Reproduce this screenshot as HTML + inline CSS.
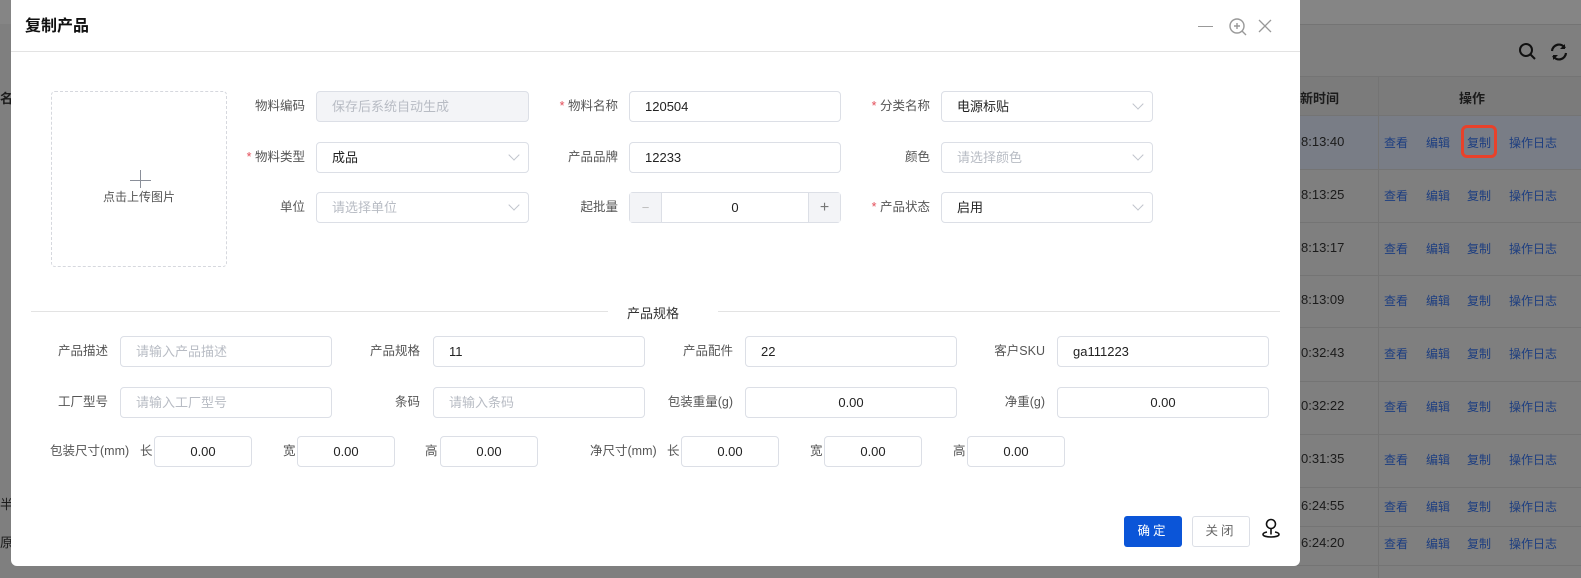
<!DOCTYPE html>
<html><head><meta charset="utf-8">
<style>
*{box-sizing:border-box;margin:0;padding:0}
body{width:1581px;height:578px;overflow:hidden;background:#7f7f7f;font-family:"Liberation Sans","Noto Sans CJK SC",sans-serif;font-size:13px;position:relative}
.a{position:absolute}
.bg-line{position:absolute;left:1290px;width:291px;height:1px;background:#747474}
.t{position:absolute;left:1301px;color:#1b1b1b;font-size:13px}
.lk{position:absolute;color:#1d3e80;font-size:12px}
.dlg{position:absolute;left:11px;top:0;width:1289px;height:566px;background:#fff;border-radius:0 0 6px 6px}
.lbl{position:absolute;color:#555;font-size:12.5px;text-align:right;line-height:30px;height:30px}
.req:before{content:"* ";color:#e34d59}
.in{position:absolute;height:31px;border:1px solid #dcdfe6;border-radius:4px;background:#fff;line-height:29px;padding-left:15px;font-size:13px;color:#222}
.ph{color:#b8bcc4}
.dis{background:#f3f4f7}
.c{text-align:center;padding-left:0}
.arr{position:absolute;right:10px;top:8px;width:8px;height:8px;border-right:1px solid #c0c4cc;border-bottom:1px solid #c0c4cc;transform:rotate(45deg)}
</style></head><body>
<!-- background page -->
<div class="a" style="left:0;top:0;width:1581px;height:24px;background:#858585"></div>
<div class="a" style="left:1290px;top:76px;width:291px;height:39px;background:#7b7b7b"></div>
<div class="a" style="left:1290px;top:115px;width:291px;height:54px;background:#797d86"></div>
<div class="bg-line" style="top:24px"></div>
<div class="bg-line" style="top:76px"></div>
<div class="bg-line" style="top:115px"></div>
<div class="bg-line" style="top:169px"></div>
<div class="bg-line" style="top:222px"></div>
<div class="bg-line" style="top:275px"></div>
<div class="bg-line" style="top:327px"></div>
<div class="bg-line" style="top:381px"></div>
<div class="bg-line" style="top:434px"></div>
<div class="bg-line" style="top:487px"></div>
<div class="bg-line" style="top:526px"></div>
<div class="bg-line" style="top:565px"></div>
<div class="a" style="left:1378px;top:76px;width:1px;height:502px;background:#747474"></div>
<svg class="a" style="left:1518px;top:42px" width="20" height="20"><circle cx="8" cy="8" r="6" fill="none" stroke="#111" stroke-width="2"/><line x1="12.5" y1="12.5" x2="17" y2="17" stroke="#111" stroke-width="2"/></svg>
<svg class="a" style="left:1549px;top:42px" width="20" height="20"><path d="M3 9a7 7 0 0 1 13-3M17 11a7 7 0 0 1-13 3" fill="none" stroke="#111" stroke-width="2.2"/><path d="M16 2v5h-5z" fill="#111"/><path d="M4 18v-5h5z" fill="#111"/></svg>
<div class="a" style="left:1300px;top:88px;font-weight:bold;color:#1b1b1b">新时间</div>
<div class="a" style="left:1459px;top:88px;font-weight:bold;color:#1b1b1b">操作</div>
<div class="a" style="left:0;top:88px;font-weight:bold;color:#1b1b1b">名</div>
<div class="a" style="left:0;top:494px;color:#1b1b1b">半</div>
<div class="a" style="left:0;top:532px;color:#1b1b1b">原</div>
<div class="t" style="top:134px">8:13:40</div>
<div class="t" style="top:187px">8:13:25</div>
<div class="t" style="top:240px">8:13:17</div>
<div class="t" style="top:292px">8:13:09</div>
<div class="t" style="top:345px">0:32:43</div>
<div class="t" style="top:398px">0:32:22</div>
<div class="t" style="top:451px">0:31:35</div>
<div class="t" style="top:498px">6:24:55</div>
<div class="t" style="top:535px">6:24:20</div>
<div id="links"></div>
<div class="a" style="left:1461px;top:125px;width:36px;height:33px;border:3px solid #e8412a;border-radius:6px"></div>
<script>
var ys=[134,187,240,292,345,398,451,498,535],h='';
ys.forEach(function(y){h+='<div class="lk" style="left:1384px;top:'+y+'px">查看</div><div class="lk" style="left:1426px;top:'+y+'px">编辑</div><div class="lk" style="left:1467px;top:'+y+'px">复制</div><div class="lk" style="left:1509px;top:'+y+'px">操作日志</div>';});
document.getElementById('links').innerHTML=h;
</script>

<div class="dlg">
<div class="a" style="left:14px;top:12px;font-size:16px;font-weight:bold;color:#111">复制产品</div>
<div class="a" style="left:0;top:51px;width:1289px;height:1px;background:#e3e3e3"></div>
<div class="a" style="left:1187px;top:26px;width:15px;height:1px;background:#999"></div>
<svg class="a" style="left:1217px;top:17px" width="20" height="20"><circle cx="9" cy="9" r="7" fill="none" stroke="#999" stroke-width="1.4"/><path d="M9 6v6M6 9h6M14 14l4 4" stroke="#999" stroke-width="1.4"/></svg>
<svg class="a" style="left:1247px;top:19px" width="14" height="14"><path d="M1 1l12 12M13 1L1 13" stroke="#999" stroke-width="1.3"/></svg>

<div class="a" style="left:40px;top:91px;width:176px;height:176px;border:1px dashed #d6d8de;border-radius:4px"></div>
<div class="a" style="left:129px;top:170px;width:1px;height:18px;background:#8a8f99"></div>
<div class="a" style="left:119px;top:180px;width:21px;height:1px;background:#8a8f99"></div>
<div class="a" style="left:92px;top:188px;color:#555;font-size:12px">点击上传图片</div>
</div>

<!-- top form (page coords) -->
<div class="lbl" style="left:200px;width:105px;top:91px">物料编码</div>
<div class="in dis ph" style="left:316px;top:91px;width:213px">保存后系统自动生成</div>
<div class="lbl req" style="left:200px;width:105px;top:142px">物料类型</div>
<div class="in" style="left:316px;top:142px;width:213px">成品<span class="arr"></span></div>
<div class="lbl" style="left:200px;width:105px;top:192px">单位</div>
<div class="in ph" style="left:316px;top:192px;width:213px">请选择单位<span class="arr"></span></div>

<div class="lbl req" style="left:510px;width:108px;top:91px">物料名称</div>
<div class="in" style="left:629px;top:91px;width:212px">120504</div>
<div class="lbl" style="left:510px;width:108px;top:142px">产品品牌</div>
<div class="in" style="left:629px;top:142px;width:212px">12233</div>
<div class="lbl" style="left:510px;width:108px;top:192px">起批量</div>
<div class="in c" style="left:629px;top:192px;width:212px">0
 <div class="a" style="left:0;top:0;width:32px;height:29px;background:#f3f4f7;border-right:1px solid #dcdfe6;color:#bbb;text-align:center">−</div>
 <div class="a" style="right:0;top:0;width:32px;height:29px;background:#f3f4f7;border-left:1px solid #dcdfe6;color:#777;text-align:center;font-size:16px">+</div>
</div>

<div class="lbl req" style="left:820px;width:110px;top:91px">分类名称</div>
<div class="in" style="left:941px;top:91px;width:212px">电源标贴<span class="arr"></span></div>
<div class="lbl" style="left:820px;width:110px;top:142px">颜色</div>
<div class="in ph" style="left:941px;top:142px;width:212px">请选择颜色<span class="arr"></span></div>
<div class="lbl req" style="left:820px;width:110px;top:192px">产品状态</div>
<div class="in" style="left:941px;top:192px;width:212px">启用<span class="arr"></span></div>

<div class="a" style="left:31px;top:311px;width:577px;height:1px;background:#e3e3e3"></div>
<div class="a" style="left:718px;top:311px;width:562px;height:1px;background:#e3e3e3"></div>
<div class="a" style="left:627px;top:303px;color:#333;font-size:13px">产品规格</div>

<div class="lbl" style="left:20px;width:88px;top:336px">产品描述</div>
<div class="in ph" style="left:120px;top:336px;width:212px">请输入产品描述</div>
<div class="lbl" style="left:330px;width:90px;top:336px">产品规格</div>
<div class="in" style="left:433px;top:336px;width:212px">11</div>
<div class="lbl" style="left:640px;width:93px;top:336px">产品配件</div>
<div class="in" style="left:745px;top:336px;width:212px">22</div>
<div class="lbl" style="left:950px;width:95px;top:336px">客户SKU</div>
<div class="in" style="left:1057px;top:336px;width:212px">ga111223</div>

<div class="lbl" style="left:20px;width:88px;top:387px">工厂型号</div>
<div class="in ph" style="left:120px;top:387px;width:212px">请输入工厂型号</div>
<div class="lbl" style="left:330px;width:90px;top:387px">条码</div>
<div class="in ph" style="left:433px;top:387px;width:212px">请输入条码</div>
<div class="lbl" style="left:640px;width:93px;top:387px">包装重量(g)</div>
<div class="in c" style="left:745px;top:387px;width:212px">0.00</div>
<div class="lbl" style="left:950px;width:95px;top:387px">净重(g)</div>
<div class="in c" style="left:1057px;top:387px;width:212px">0.00</div>

<div class="lbl" style="left:50px;top:436px;text-align:left">包装尺寸(mm)</div>
<div class="lbl" style="left:140px;top:436px">长</div>
<div class="in c" style="left:154px;top:436px;width:98px">0.00</div>
<div class="lbl" style="left:283px;top:436px">宽</div>
<div class="in c" style="left:297px;top:436px;width:98px">0.00</div>
<div class="lbl" style="left:425px;top:436px">高</div>
<div class="in c" style="left:440px;top:436px;width:98px">0.00</div>
<div class="lbl" style="left:590px;top:436px;text-align:left">净尺寸(mm)</div>
<div class="lbl" style="left:667px;top:436px">长</div>
<div class="in c" style="left:681px;top:436px;width:98px">0.00</div>
<div class="lbl" style="left:810px;top:436px">宽</div>
<div class="in c" style="left:824px;top:436px;width:98px">0.00</div>
<div class="lbl" style="left:953px;top:436px">高</div>
<div class="in c" style="left:967px;top:436px;width:98px">0.00</div>

<div class="a" style="left:1124px;top:516px;width:58px;height:31px;background:#0b55d8;border-radius:3px;color:#fff;text-align:center;line-height:31px;letter-spacing:3px;font-size:12.5px">确定</div>
<div class="a" style="left:1192px;top:516px;width:58px;height:31px;border:1px solid #dcdfe6;border-radius:3px;color:#666;text-align:center;line-height:29px;letter-spacing:3px;font-size:12.5px">关闭</div>
<svg class="a" style="left:1261px;top:518px" width="20" height="22"><circle cx="10" cy="6" r="4.5" fill="none" stroke="#111" stroke-width="1.6"/><path d="M10 10.5v6" stroke="#111" stroke-width="1.6"/><path d="M6 14c-3 .5-4 1.5-4 2.5 0 1.5 3.5 2.5 8 2.5s8-1 8-2.5c0-1-1-2-4-2.5" fill="none" stroke="#111" stroke-width="1.6"/></svg>
</body></html>
